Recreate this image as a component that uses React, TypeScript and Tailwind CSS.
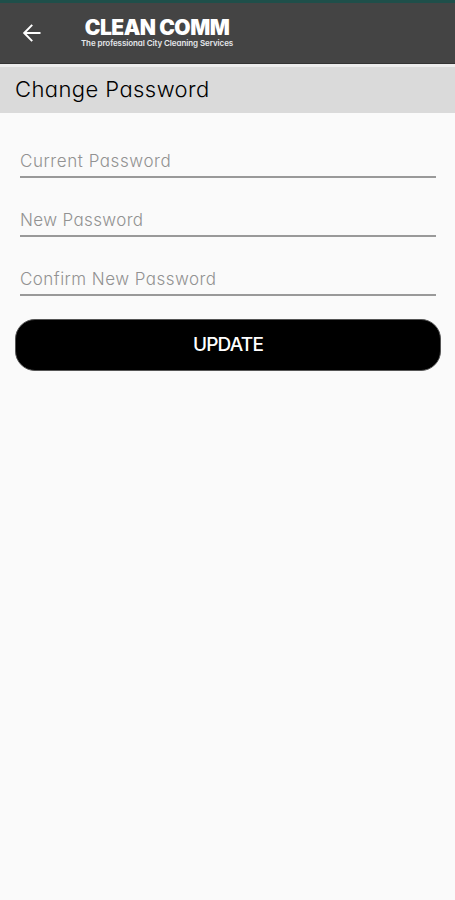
const fields = [
  { name: "current", label: "Current Password", tracking: "tracking-[0.56px]" },
  { name: "new", label: "New Password", tracking: "tracking-[0.36px]" },
  { name: "confirm", label: "Confirm New Password", tracking: "tracking-[0.46px]" },
];

export default function App() {
  return (
    <div className="flex min-h-screen w-full flex-col bg-[#fafafa] font-['Inter',sans-serif] [font-feature-settings:'cv11']">
      {/* Status bar strip */}
      <div className="h-[3px] bg-[#1f4f4a]" />

      <header className="flex h-[61px] items-center border-b border-[#333333] bg-[#444444] pl-[22px] text-white">
        <button type="button" aria-label="Back">
          <svg width="20" height="20" viewBox="0 0 20 20" fill="none" stroke="currentColor" strokeWidth="2">
            <path d="M18.5 10H2.5M10.2 1.9L2.2 10l8 8.1" />
          </svg>
        </button>
        <div className="ml-[39px] flex w-[152px] flex-col items-center whitespace-nowrap">
          <span className="text-[21px] leading-[21px] font-black tracking-[-0.5px]">CLEAN COMM</span>
          <span className="text-[8px] leading-[11px] font-semibold tracking-[-0.08px] text-gray-200">
            The professional City Cleaning Services
          </span>
        </div>
      </header>

      <div className="h-[49px] border-t-3 border-[#ececec] bg-[#dadada] pl-[15px]">
        <h1 className="text-[22px] leading-[45px] font-light tracking-[0.42px] text-black">Change Password</h1>
      </div>

      <form className="flex flex-col px-[15px] pt-[6px]">
        {fields.map((field) => (
          <div key={field.name} className="mr-[4px] ml-[5px] flex h-[59px] flex-col justify-end border-b-2 border-[#999999] pb-[3px]">
            <label className={`text-[17px] leading-6 font-light text-[#929292] ${field.tracking}`}>{field.label}</label>
          </div>
        ))}
        <button
          type="button"
          className="mt-[23px] h-[52px] w-[426px] rounded-[20px] border border-[#555555] bg-black text-[19px] font-medium tracking-[-0.8px] text-white"
        >
          UPDATE
        </button>
      </form>
    </div>
  );
}
